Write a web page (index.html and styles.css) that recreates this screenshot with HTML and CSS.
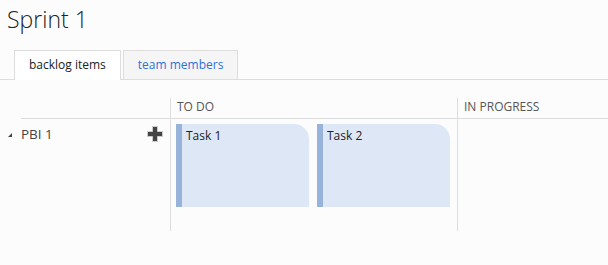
FILE: index.html
```html
<!DOCTYPE html>
<html>
<head>
	<title>Sprint 1</title>
	<link rel="stylesheet" href="styles.css">
</head>
<body>
	<h1 class="title">Sprint 1</h1>
	<div class="tabs">
		<div class="tab active">backlog items</div>
		<div class="tab">team members</div>
	</div>
	<div class="board">
		<div class="head head-rows"></div>
		<div class="head col">TO DO</div>
		<div class="head col">IN PROGRESS</div>

		<div class="row-head">
			<span class="toggle"></span>
			<span class="pbi">PBI 1</span>
			<svg class="add" width="16" height="16" viewBox="0 0 16 16">
				<path d="M5.5 0.5h5v5h5v5h-5v5h-5v-5h-5v-5h5z" fill="#444" stroke="#ccc" stroke-width="1"/>
			</svg>
		</div>
		<div class="cell">
			<div class="card">Task 1</div>
			<div class="card">Task 2</div>
		</div>
		<div class="cell"></div>
	</div>
</body>
</html>
```

FILE: styles.css
```css
body {
	margin: 0;
	background: #fcfcfc;
	color: #222;
	font-family: 'Open Sans', sans-serif;
	font-size: 12px;
}

.title {
	margin: 0;
	padding: 3px 0 0 7px;
	font-size: 23px;
	font-weight: 300;
	line-height: 32px;
	color: #222;
}

.tabs {
	display: flex;
	gap: 2px;
	margin-top: 15px;
	padding-left: 14px;
	border-bottom: 1px solid #ddd;
	height: 29px;
}

.tab {
	box-sizing: border-box;
	height: 29px;
	padding: 0 14px;
	line-height: 28px;
	border: 1px solid #ddd;
	border-bottom: none;
	background: #f5f5f5;
	color: #2d72d9;
}

.tab.active {
	height: 30px;
	background: #fff;
	color: #222;
}

.board {
	display: grid;
	grid-template-columns: 170px 287px 1fr;
	margin-top: 18px;
}

.head {
	height: 20px;
	border-bottom: 1px solid #ddd;
}

.head-rows {
	margin-left: 21px;
}

.col {
	border-left: 1px solid #ddd;
	padding-left: 6px;
	line-height: 18px;
	font-size: 12px;
	color: #555;
}

.row-head {
	display: flex;
	align-items: flex-start;
	padding: 6px 7px 0 8px;
}

.toggle {
	width: 0;
	height: 0;
	margin: 8px 9px 0 0;
	border-left: 4px solid transparent;
	border-bottom: 4px solid #444;
}

.pbi {
	flex: 1;
	font-size: 13.5px;
	line-height: 18px;
	color: #444;
}

.add {
	margin-top: 1px;
}

.cell {
	display: flex;
	gap: 8px;
	height: 107px;
	padding: 5px 0 0 5px;
	border-left: 1px solid #ddd;
}

.card {
	box-sizing: border-box;
	width: 133px;
	height: 83px;
	padding: 4px 0 0 4px;
	background: #dde7f5;
	border-left: 6px solid #97b3d9;
	border-top-right-radius: 15px;
	font-size: 12px;
	line-height: 16px;
	color: #222;
}
```
